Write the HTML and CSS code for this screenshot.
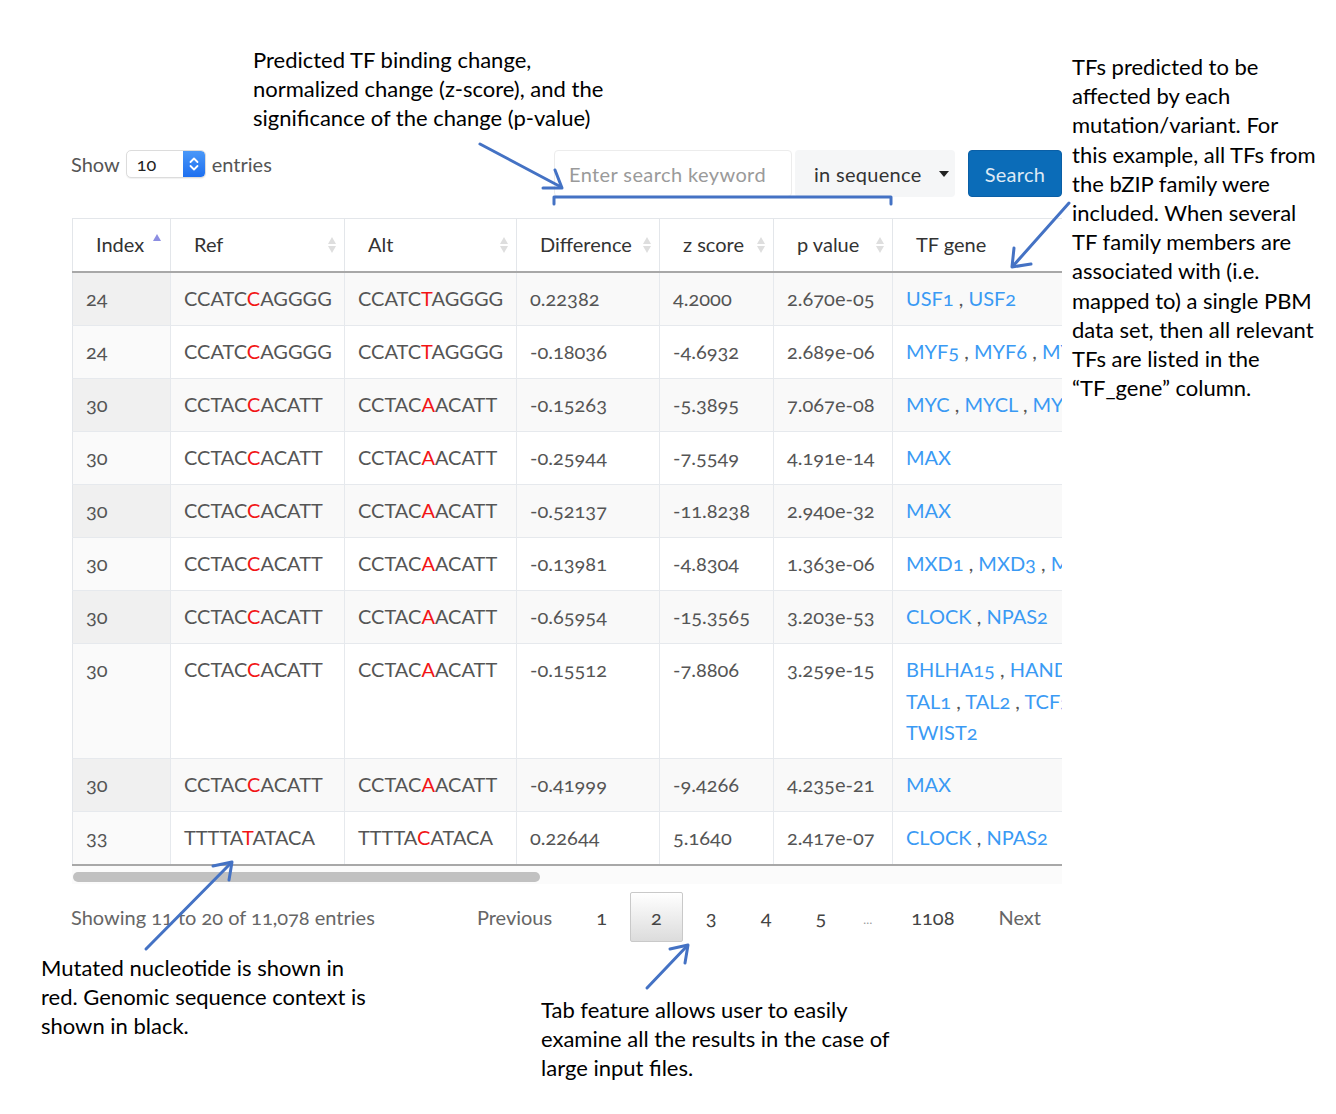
FILE: index.html
```html
<!DOCTYPE html>
<html lang="en">
<head>
<meta charset="utf-8">
<title>TF binding results</title>
<link rel="stylesheet" href="styles.css">
</head>
<body>
<div class="figure">
  <div class="app">
    <div class="controls">
      <div class="length">
        <span>Show</span>
        <span class="select"><span class="sel-val">10</span><span class="stepper"><svg width="12" height="18" viewBox="0 0 12 18"><path d="M2.5 7 L6 3.5 L9.5 7" fill="none" stroke="#fff" stroke-width="1.8" stroke-linecap="round" stroke-linejoin="round"/><path d="M2.5 11 L6 14.5 L9.5 11" fill="none" stroke="#fff" stroke-width="1.8" stroke-linecap="round" stroke-linejoin="round"/></svg></span></span>
        <span>entries</span>
      </div>
      <div class="search">
        <input class="kw" type="text" placeholder="Enter search keyword">
        <span class="dd">in sequence <span class="caret"></span></span>
        <button class="btn" type="button">Search</button>
      </div>
    </div>

    <div class="scroll">
      <table class="grid">
        <colgroup>
          <col class="c-idx"><col class="c-ref"><col class="c-alt"><col class="c-diff"><col class="c-z"><col class="c-p"><col class="c-tf">
        </colgroup>
        <thead>
          <tr>
            <th>Index<span class="sort active"></span></th>
            <th>Ref<span class="sort"></span></th>
            <th>Alt<span class="sort"></span></th>
            <th>Difference<span class="sort"></span></th>
            <th>z score<span class="sort"></span></th>
            <th>p value<span class="sort"></span></th>
            <th>TF gene</th>
          </tr>
        </thead>
        <tbody>
          <tr class="odd"><td class="sorted">24</td><td>CCATC<b class="mut">C</b>AGGGG</td><td>CCATC<b class="mut">T</b>AGGGG</td><td>0.22382</td><td>4.2000</td><td>2.670e-05</td><td><a class="tf">USF1</a><span class="sep"> , </span><a class="tf">USF2</a></td></tr>
          <tr><td class="sorted">24</td><td>CCATC<b class="mut">C</b>AGGGG</td><td>CCATC<b class="mut">T</b>AGGGG</td><td>-0.18036</td><td>-4.6932</td><td>2.689e-06</td><td><a class="tf">MYF5</a><span class="sep"> , </span><a class="tf">MYF6</a><span class="sep"> , </span><a class="tf">MYOD1</a></td></tr>
          <tr class="odd"><td class="sorted">30</td><td>CCTAC<b class="mut">C</b>ACATT</td><td>CCTAC<b class="mut">A</b>ACATT</td><td>-0.15263</td><td>-5.3895</td><td>7.067e-08</td><td><a class="tf">MYC</a><span class="sep"> , </span><a class="tf">MYCL</a><span class="sep"> , </span><a class="tf">MYCN</a></td></tr>
          <tr><td class="sorted">30</td><td>CCTAC<b class="mut">C</b>ACATT</td><td>CCTAC<b class="mut">A</b>ACATT</td><td>-0.25944</td><td>-7.5549</td><td>4.191e-14</td><td><a class="tf">MAX</a></td></tr>
          <tr class="odd"><td class="sorted">30</td><td>CCTAC<b class="mut">C</b>ACATT</td><td>CCTAC<b class="mut">A</b>ACATT</td><td>-0.52137</td><td>-11.8238</td><td>2.940e-32</td><td><a class="tf">MAX</a></td></tr>
          <tr><td class="sorted">30</td><td>CCTAC<b class="mut">C</b>ACATT</td><td>CCTAC<b class="mut">A</b>ACATT</td><td>-0.13981</td><td>-4.8304</td><td>1.363e-06</td><td><a class="tf">MXD1</a><span class="sep"> , </span><a class="tf">MXD3</a><span class="sep"> , </span><a class="tf">MXD4</a></td></tr>
          <tr class="odd"><td class="sorted">30</td><td>CCTAC<b class="mut">C</b>ACATT</td><td>CCTAC<b class="mut">A</b>ACATT</td><td>-0.65954</td><td>-15.3565</td><td>3.203e-53</td><td><a class="tf">CLOCK</a><span class="sep"> , </span><a class="tf">NPAS2</a></td></tr>
          <tr class="tall"><td class="sorted">30</td><td>CCTAC<b class="mut">C</b>ACATT</td><td>CCTAC<b class="mut">A</b>ACATT</td><td>-0.15512</td><td>-7.8806</td><td>3.259e-15</td><td><a class="tf">BHLHA15</a><span class="sep"> , </span><a class="tf">HAND1</a><span class="sep"> ,</span><br><a class="tf">TAL1</a><span class="sep"> , </span><a class="tf">TAL2</a><span class="sep"> , </span><a class="tf">TCF3</a><span class="sep"> ,</span><br><a class="tf">TWIST2</a></td></tr>
          <tr class="odd"><td class="sorted">30</td><td>CCTAC<b class="mut">C</b>ACATT</td><td>CCTAC<b class="mut">A</b>ACATT</td><td>-0.41999</td><td>-9.4266</td><td>4.235e-21</td><td><a class="tf">MAX</a></td></tr>
          <tr><td class="sorted">33</td><td>TTTTA<b class="mut">T</b>ATACA</td><td>TTTTA<b class="mut">C</b>ATACA</td><td>0.22644</td><td>5.1640</td><td>2.417e-07</td><td><a class="tf">CLOCK</a><span class="sep"> , </span><a class="tf">NPAS2</a></td></tr>
        </tbody>
      </table>
    </div>
    <div class="scrollbar"><div class="thumb"></div></div>

    <div class="footer">
      <div class="info">Showing 11 to 20 of 11,078 entries</div>
      <div class="pages">
        <a class="pg pg-nav">Previous</a>
        <a class="pg">1</a>
        <a class="pg current">2</a>
        <a class="pg">3</a>
        <a class="pg">4</a>
        <a class="pg">5</a>
        <span class="ellipsis">…</span>
        <a class="pg">1108</a>
        <a class="pg pg-nav">Next</a>
      </div>
    </div>
  </div>

  <p class="note note-top">Predicted TF binding change,<br>normalized change (z-score), and the<br>significance of the change (p-value)</p>
  <p class="note note-right">TFs predicted to be<br>affected by each<br>mutation/variant. For<br>this example, all TFs from<br>the bZIP family were<br>included. When several<br>TF family members are<br>associated with (i.e.<br>mapped to) a single PBM<br>data set, then all relevant<br>TFs are listed in the<br>“TF_gene” column.</p>
  <p class="note note-bl">Mutated nucleotide is shown in<br>red. Genomic sequence context is<br>shown in black.</p>
  <p class="note note-bm">Tab feature allows user to easily<br>examine all the results in the case of<br>large input files.</p>

  <svg class="arrows" width="1336" height="1114" viewBox="0 0 1336 1114">
    <g fill="none" stroke="#4472c4" stroke-width="3" stroke-linecap="round" stroke-linejoin="round">
      <path d="M554 204 V197 H891 V204"/>
      <path d="M480 144 L561 187"/>
      <path d="M543 188 L562 188 L555 170"/>
      <path d="M1069 203 L1013 266"/>
      <path d="M1014 248 L1012 267 L1031 264"/>
      <path d="M146 949 L231 863"/>
      <path d="M213 866 L232 862 L229 880"/>
      <path d="M647 988 L687 946"/>
      <path d="M670 949 L688 945 L685 963"/>
    </g>
  </svg>
</div>
</body>
</html>
```

FILE: styles.css
```css
* { box-sizing: border-box; }

html, body {
  margin: 0;
  padding: 0;
  background: #ffffff;
}

body {
  font-family: "Lato", "Open Sans", sans-serif;
  font-variant-numeric: oldstyle-nums;
  color: #555;
}

.figure {
  position: relative;
  width: 1336px;
  height: 1114px;
  overflow: hidden;
}

.app {
  padding: 150px 0 0 72px;
  width: 1062px;
  font-size: 20px;
}

/* ---------- controls ---------- */
.controls {
  display: flex;
  justify-content: space-between;
  align-items: flex-start;
  height: 47px;
  margin-bottom: 21px;
}

.length {
  display: flex;
  align-items: center;
  gap: 6px;
  height: 28px;
  margin-left: -1px;
  color: #555;
}

.select {
  display: flex;
  align-items: stretch;
  width: 80px;
  height: 28px;
  border: 1px solid #dcdcdc;
  border-radius: 5px;
  background: #fff;
  box-shadow: 0 1px 1px rgba(0,0,0,0.06);
  overflow: hidden;
}

.sel-val {
  flex: 1;
  padding-left: 10px;
  line-height: 26px;
  font-size: 18px;
  color: #222;
}

.stepper {
  width: 22px;
  display: flex;
  align-items: center;
  justify-content: center;
  background: linear-gradient(#4a98f8, #1d6ff0);
  border-radius: 0 4px 4px 0;
}

.search {
  display: flex;
  align-items: stretch;
  height: 47px;
}

.kw {
  width: 238px;
  height: 47px;
  margin: 0 0 0 -1px;
  padding: 0 14px;
  border: 1px solid #ececec;
  border-radius: 4px;
  font-family: inherit;
  font-size: 20px;
  letter-spacing: 0.4px;
  color: #555;
  background: #fff;
  outline: none;
}
.kw::placeholder { color: #9a9a9a; }

.dd {
  display: flex;
  align-items: center;
  gap: 17px;
  width: 160px;
  margin-left: 3px;
  padding-left: 19px;
  background: #f5f6f7;
  border-radius: 4px;
  color: #333;
  font-size: 20px;
  letter-spacing: 0.3px;
}

.caret {
  width: 0;
  height: 0;
  border-left: 5px solid transparent;
  border-right: 5px solid transparent;
  border-top: 6px solid #222;
  margin-top: 1px;
}

.btn {
  width: 94px;
  margin-left: 13px;
  border: 1px solid #0a5fa6;
  border-radius: 4px;
  background: #0b6cb8;
  color: #dde9f5;
  font-family: inherit;
  font-size: 20px;
  letter-spacing: 0.3px;
  padding: 0;
}

/* ---------- table ---------- */
.scroll {
  width: 990px;
  overflow: hidden;
}

.grid {
  table-layout: fixed;
  width: 1420px;
  border-collapse: collapse;
  border-left: 1px solid #e3e6ea;
  border-top: 1px solid #e3e6ea;
  border-bottom: 2px solid #a8a8a8;
  font-size: 20px;
}

.c-idx { width: 98px; }
.c-ref { width: 174px; }
.c-alt { width: 172px; }
.c-diff { width: 143px; }
.c-z { width: 114px; }
.c-p { width: 119px; }
.c-tf { width: 600px; }

.grid th {
  position: relative;
  padding: 10px 20px 10px 23px;
  line-height: 31.5px;
  text-align: left;
  font-weight: normal;
  color: #333;
  border-right: 1px solid #e3e6ea;
  border-bottom: 2px solid #a8a8a8;
  white-space: nowrap;
}

.sort {
  position: absolute;
  right: 7px;
  top: 50%;
  width: 9px;
  height: 16px;
  margin-top: -8px;
}
.sort::before, .sort::after {
  content: "";
  position: absolute;
  left: 0;
  width: 0;
  height: 0;
  border-left: 4.5px solid transparent;
  border-right: 4.5px solid transparent;
}
.sort::before { top: 0; border-bottom: 7px solid #dedede; }
.sort::after { bottom: 0; border-top: 7px solid #dedede; }
.sort.active { right: 8px; margin-top: -11px; }
.sort.active::before { border-bottom-color: #8c8ee2; }
.sort.active::after { display: none; }

.grid td {
  padding: 10.5px 13px 10px 13px;
  line-height: 31.5px;
  vertical-align: top;
  border-right: 1px solid #e6e9ed;
  border-top: 1px solid #e6e9ed;
  white-space: nowrap;
  color: #555;
}

.grid tr.tall td { line-height: 31.5px; padding-bottom: 9px; }

.grid tr.odd td { background: #f9f9f9; }
.grid tr.odd td.sorted { background: #f0f0f0; }
.grid td.sorted { background: #fafafa; }

.mut {
  font-weight: normal;
  color: #f21515;
}

.tf {
  color: #3a9af4;
  text-decoration: none;
}

.sep { color: #555; }

/* ---------- scrollbar ---------- */
.scrollbar {
  width: 990px;
  height: 18px;
  padding: 6px 0 2px 1px;
  background: #fbfbfb;
}
.thumb {
  width: 467px;
  height: 10px;
  border-radius: 5px;
  background: #c1c1c1;
}

/* ---------- footer ---------- */
.footer {
  display: flex;
  justify-content: space-between;
  align-items: center;
  width: 990px;
  margin-top: 8px;
  height: 50px;
}

.info {
  color: #666;
  margin-left: -1px;
}

.pages {
  display: flex;
  align-items: center;
}

.pg {
  display: block;
  margin-left: 2px;
  padding: 9px 20px;
  line-height: 30px;
  text-align: center;
  border: 1px solid transparent;
  border-radius: 2px;
  color: #444;
}

.pg-nav { color: #666; }

.pg.current {
  border-color: #c9c9c9;
  background: linear-gradient(#ffffff, #dcdcdc);
  color: #444;
}

.ellipsis {
  padding: 6px 16px 0 14px;
  margin-left: 2px;
  font-size: 12px;
  color: #999;
  line-height: 29px;
}

/* ---------- annotations ---------- */
.note {
  position: absolute;
  margin: 0;
  font-family: "Lato", "Carlito", sans-serif;
  font-variant-numeric: normal;
  font-size: 22px;
  line-height: 29.2px;
  color: #000;
  white-space: nowrap;
}
.note-top { left: 253px; top: 45px; }
.note-right { left: 1072px; top: 52px; }
.note-bl { left: 41px; top: 953px; }
.note-bm { left: 541px; top: 995px; }

.arrows {
  position: absolute;
  left: 0;
  top: 0;
  pointer-events: none;
}
```
